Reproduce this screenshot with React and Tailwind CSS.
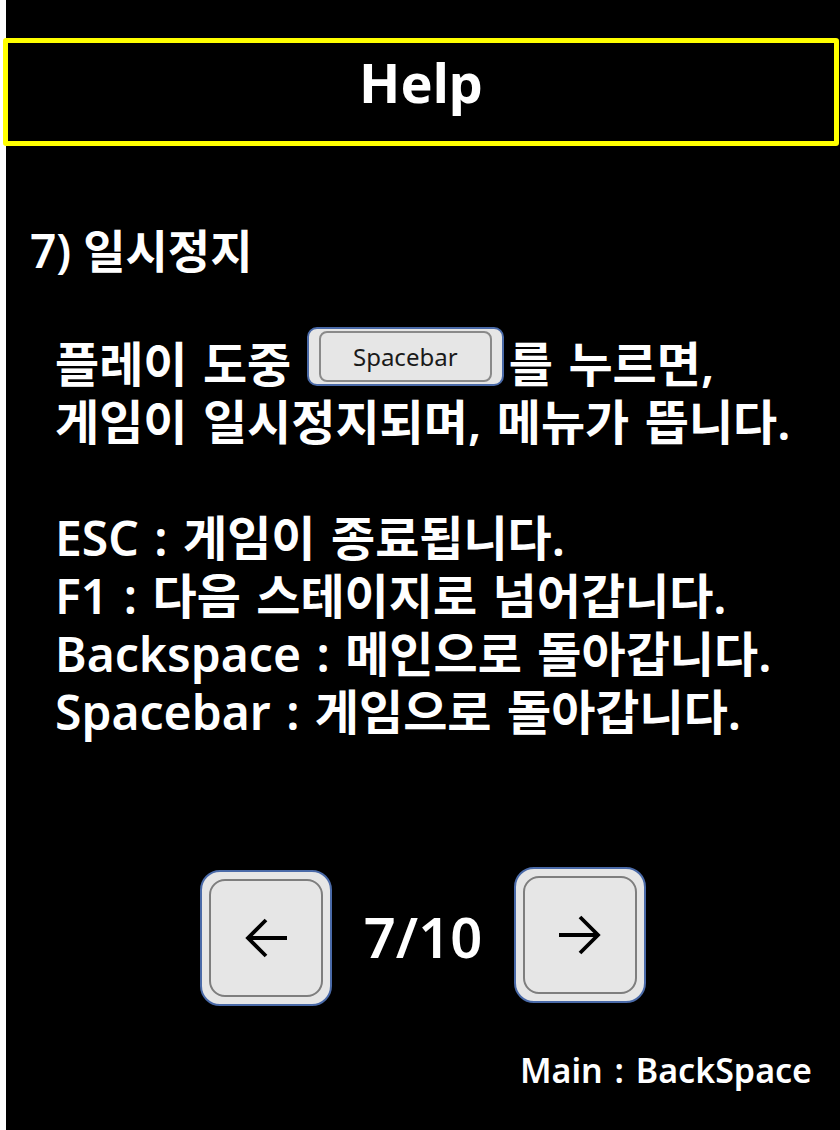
const font = "font-['Noto_Sans','Noto_Sans_CJK_KR',sans-serif]";

function KeyCap({ children }) {
  return (
    <span className="inline-flex align-middle w-[197px] h-[59px] mr-[5px] bg-[#e6e6e6] border-2 border-[#4a6aa8] rounded-[10px] px-[10px] py-[2px] -mt-[24px] [word-spacing:0]">
      <span className="flex-1 flex items-center justify-center border-2 border-[#8a8a8a] rounded-[8px] text-[24px] leading-none font-normal text-[#1a1a1a] font-['Noto_Sans',sans-serif]">
        {children}
      </span>
    </span>
  );
}

function ArrowButton({ dir, className }) {
  return (
    <button
      className={`w-[132px] h-[136px] bg-[#e6e6e6] border-2 border-[#4a6aa8] rounded-[20px] p-[7px] flex ${className}`}
    >
      <span className="flex-1 flex items-center justify-center border-2 border-[#7e7e7e] rounded-[16px]">
        <svg width="44" height="40" viewBox="0 0 44 40" fill="none" stroke="#000" strokeWidth="3.8">
          {dir === "left" ? (
            <path d="M43 20H4M22 2L4 20L22 38" />
          ) : (
            <path d="M1 20H40M22 2L40 20L22 38" />
          )}
        </svg>
      </span>
    </button>
  );
}

export default function App() {
  return (
    <div className={`w-[840px] h-[1130px] bg-black border-l-[6px] border-white flex flex-col text-white ${font}`}>
      {/* header */}
      <div className="mt-[38px] -ml-[3px] w-[836px] h-[108px] border-[5px] border-[#ffff00] rounded-[3px] flex items-center justify-center">
        <h1 className="text-[54px] font-bold leading-none -mt-[20px]">Help</h1>
      </div>

      <h2 className="mt-[80px] pl-[24px] text-[46px] leading-[48px] font-semibold">7) 일시정지</h2>

      <div className="mt-[61px] pl-[49px] text-[48px] leading-[58px] font-semibold [word-spacing:3px]">
        <p>
          플레이 도중 <KeyCap>Spacebar</KeyCap>를 누르면,
        </p>
        <p>게임이 일시정지되며, 메뉴가 뜹니다.</p>
        <p>&nbsp;</p>
        <p>ESC : 게임이 종료됩니다.</p>
        <p>F1 : 다음 스테이지로 넘어갑니다.</p>
        <p>Backspace : 메인으로 돌아갑니다.</p>
        <p>Spacebar : 게임으로 돌아갑니다.</p>
      </div>

      {/* pagination */}
      <div className="mt-[125px] flex items-center justify-center gap-[32px]">
        <ArrowButton dir="left" className="mt-[4px]" />
        <span className="text-[56px] font-semibold leading-none">7/10</span>
        <ArrowButton dir="right" className="-mt-[2px]" />
      </div>

      <p className="mt-[44px] pr-[28px] text-right text-[34px] leading-[40px] font-semibold [word-spacing:3px]">
        Main : BackSpace
      </p>
    </div>
  );
}
